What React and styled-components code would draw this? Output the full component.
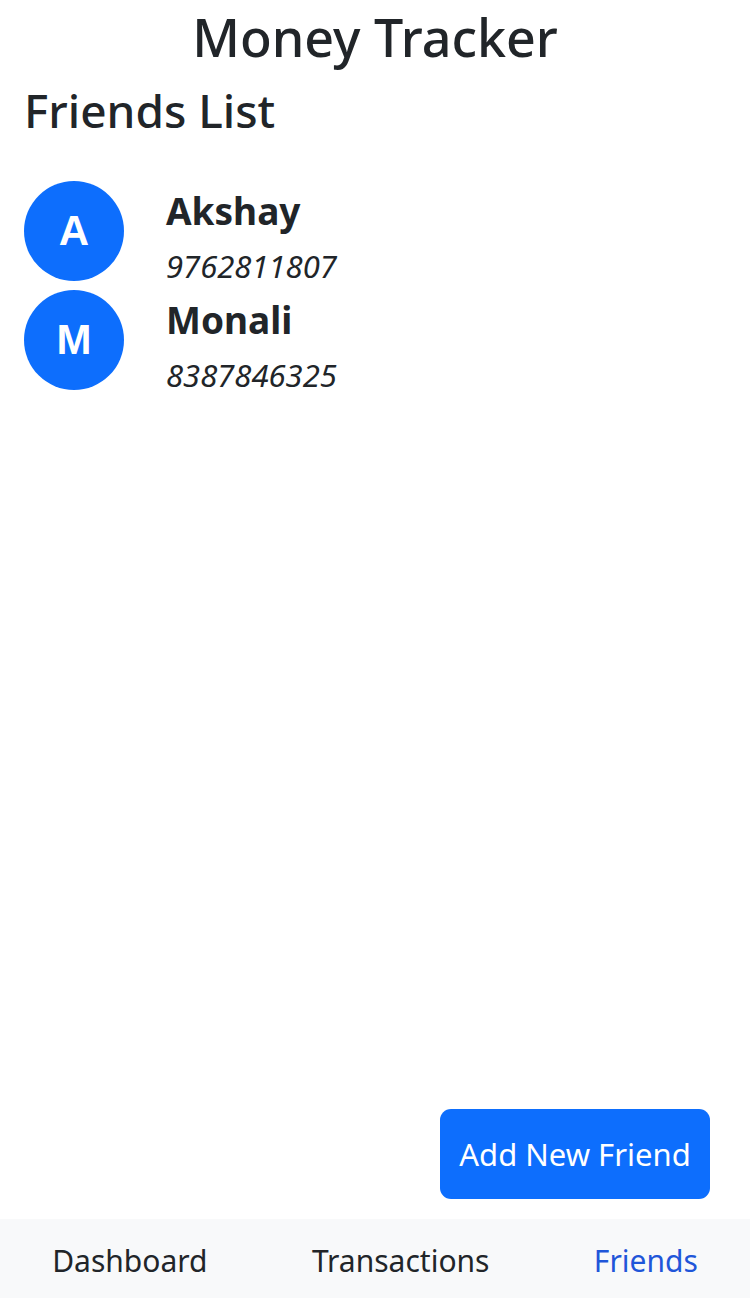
import React from 'react';
import styled, { createGlobalStyle } from 'styled-components';

const GlobalStyle = createGlobalStyle`
  html, body {
    margin: 0;
    padding: 0;
    background: #fff;
  }
  body {
    font-family: "Noto Sans", "Open Sans", sans-serif;
    color: #212529;
  }
`

const Page = styled.div`
  min-height: 100vh;
  display: flex;
  flex-direction: column;
`

const Title = styled.h1`
  margin: 0;
  padding-top: 4px;
  text-align: center;
  font-size: 52px;
  font-weight: 500;
  line-height: 66px;
`

const Content = styled.main`
  flex: 1;
  display: flex;
  flex-direction: column;
  padding: 0 24px;
`

const SectionTitle = styled.h2`
  margin: 12px 0 0;
  font-size: 46px;
  font-weight: 500;
  line-height: 56px;
`

const FriendList = styled.ul`
  list-style: none;
  margin: 43px 0 0;
  padding: 0;
  display: flex;
  flex-direction: column;
  gap: 9px;
`

const FriendRow = styled.li`
  display: flex;
  align-items: flex-start;
  gap: 42px;
  height: 100px;
`

const Avatar = styled.div`
  width: 100px;
  height: 100px;
  flex-shrink: 0;
  border-radius: 50%;
  background: #0d6efd;
  color: #fff;
  display: flex;
  align-items: center;
  justify-content: center;
  font-family: "Liberation Sans", Arial, sans-serif;
  font-weight: 700;
  font-size: 42px;
`

const FriendInfo = styled.div`
  display: flex;
  flex-direction: column;
  padding-top: 6px;
`

const FriendName = styled.div`
  font-size: 37px;
  font-weight: 700;
  line-height: 48px;
`

const FriendPhone = styled.div`
  font-size: 31px;
  font-style: italic;
  line-height: 40px;
  margin-top: 11px;
`

const Actions = styled.div`
  margin-top: auto;
  display: flex;
  justify-content: flex-end;
  padding: 0 16px 20px 0;
`

const Button = styled.button`
  font-family: inherit;
  font-size: 31px;
  color: #fff;
  background: #0d6efd;
  border: none;
  border-radius: 11px;
  width: 270px;
  height: 90px;
  padding: 0;
  cursor: pointer;
`

const BottomNav = styled.nav`
  height: 79px;
  background: #f8f9fa;
  display: flex;
  justify-content: space-around;
  align-items: center;
`

const NavItem = styled.a`
  font-size: 30px;
  text-decoration: none;
  padding-top: 4px;
  color: ${p => (p.$active ? '#1f56d9' : '#212529')};
`

const friends = [
  { name: 'Akshay', phone: '9762811807' },
  { name: 'Monali', phone: '8387846325' },
];

const App = () => {
  return (
    <Page>
      <GlobalStyle />
      <Title>Money Tracker</Title>
      <Content>
        <SectionTitle>Friends List</SectionTitle>
        <FriendList>
          {friends.map(f => (
            <FriendRow key={f.phone}>
              <Avatar>{f.name[0]}</Avatar>
              <FriendInfo>
                <FriendName>{f.name}</FriendName>
                <FriendPhone>{f.phone}</FriendPhone>
              </FriendInfo>
            </FriendRow>
          ))}
        </FriendList>
        <Actions>
          <Button>Add New Friend</Button>
        </Actions>
      </Content>
      <BottomNav>
        <NavItem href="#">Dashboard</NavItem>
        <NavItem href="#">Transactions</NavItem>
        <NavItem href="#" $active>Friends</NavItem>
      </BottomNav>
    </Page>
  );
};

export default App;
